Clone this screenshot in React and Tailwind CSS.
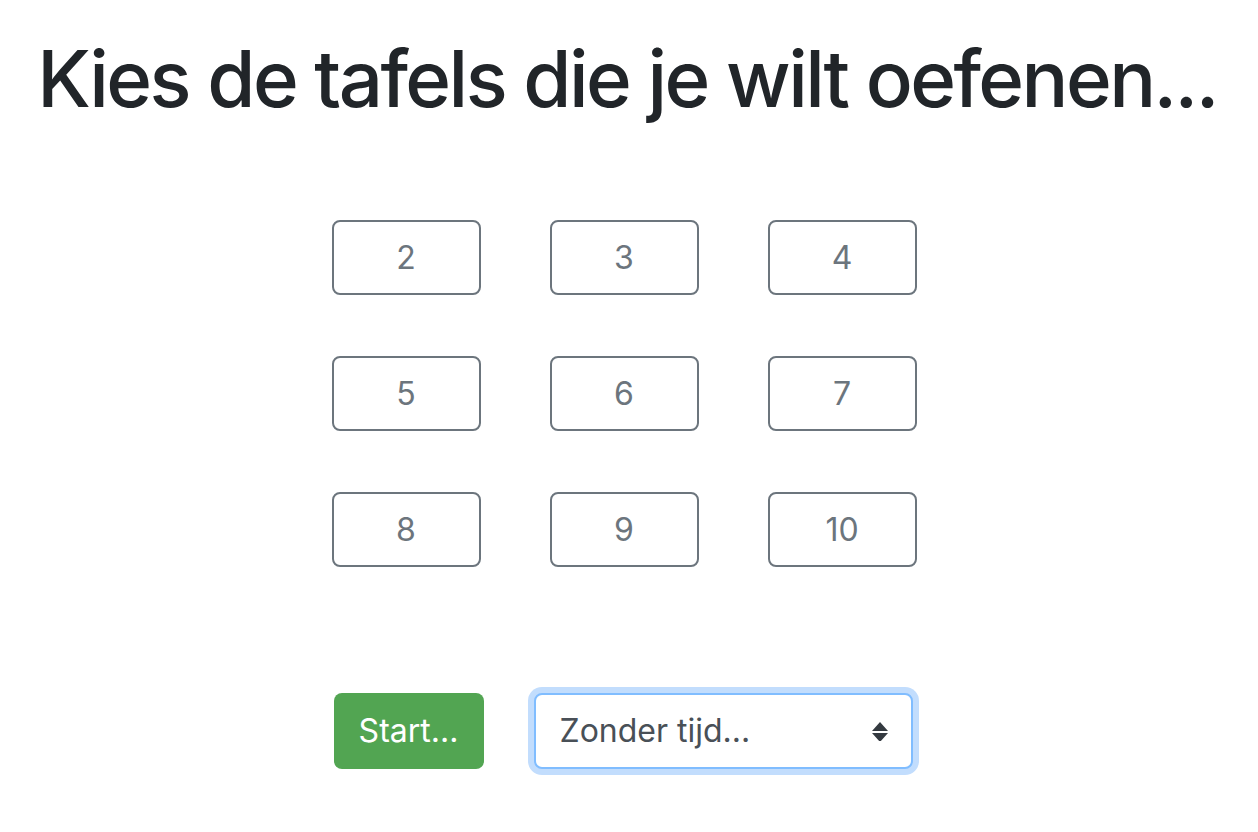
export default function App() {
  const tables = [2, 3, 4, 5, 6, 7, 8, 9, 10];

  return (
    <div className="min-h-screen bg-white font-['Inter','Liberation_Sans',sans-serif] text-[#212529]">
      <h1 className="whitespace-nowrap pt-[31px] pr-[4px] text-center text-[78px] font-medium leading-[96px] tracking-[-0.033em]">
        Kies de tafels die je wilt oefenen...
      </h1>

      <div className="mt-[93px] flex justify-center pr-[10px]">
        <div className="grid grid-cols-[repeat(3,149px)] gap-x-[69px] gap-y-[61px]">
          {tables.map((n) => (
            <button
              key={n}
              className="h-[75px] rounded-[8px] border-2 border-[#6c757d] bg-white text-[32px] leading-none text-[#6c757d]"
            >
              {n}
            </button>
          ))}
        </div>
      </div>

      <div className="mt-[126px] flex items-center justify-center gap-[50px] pr-[12px]">
        <button className="h-[76px] w-[150px] rounded-[8px] bg-[#52a552] text-[32px] leading-none text-white">
          Start...
        </button>
        <div className="relative h-[76px] w-[379px] rounded-[8px] border-2 border-[#80bdff] bg-white shadow-[0_0_0_6px_#c2ddfd]">
          <span className="absolute left-[24px] top-1/2 -translate-y-1/2 text-[32px] leading-none text-[#495057]">
            Zonder tijd...
          </span>
          <svg
            className="absolute right-[23px] top-[27px]"
            width="16"
            height="19"
            viewBox="0 0 16 19"
          >
            <path d="M8 0 L16 9 L0 9 Z M0 11 L16 11 L8 20 Z" fill="#343a40" />
          </svg>
        </div>
      </div>
    </div>
  );
}
